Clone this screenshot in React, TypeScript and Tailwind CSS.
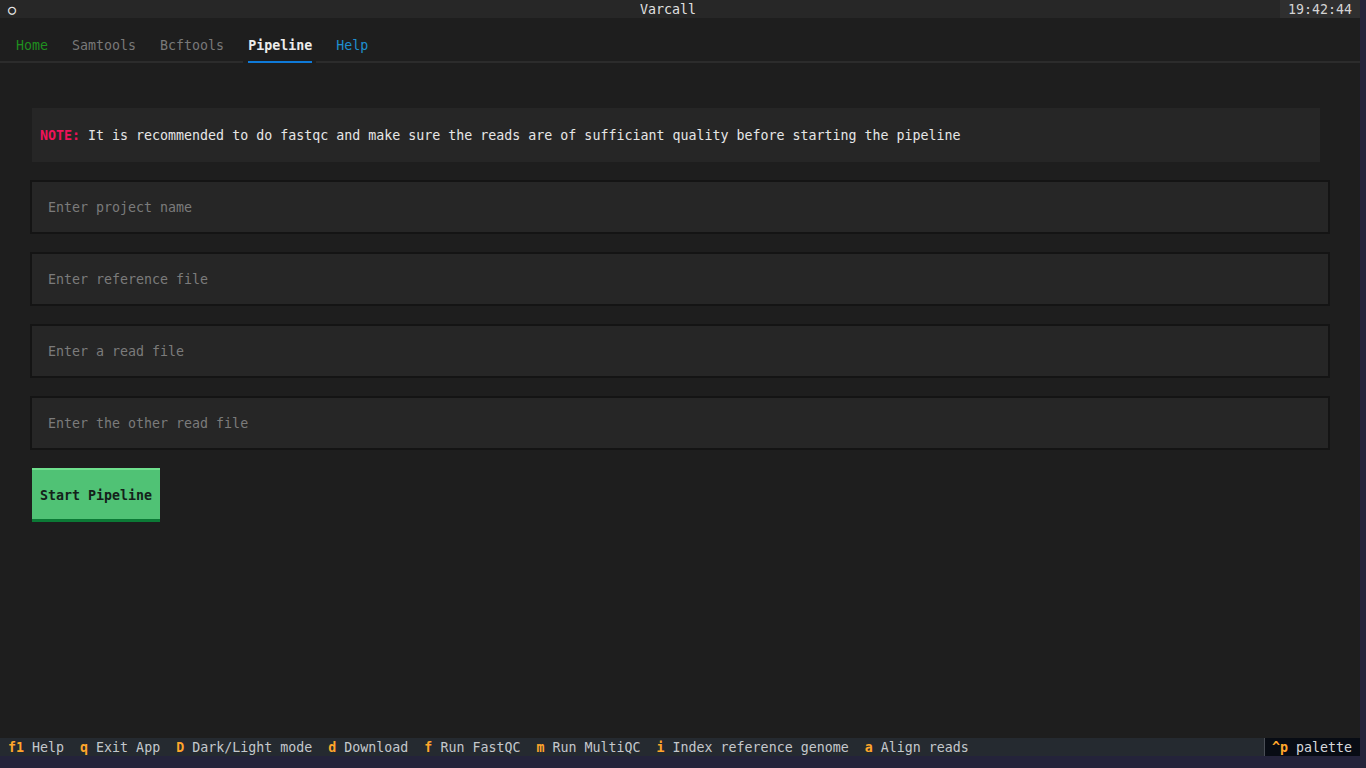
import React from 'react';

const tabs = [
  { label: 'Home', cls: 'text-[#1f8f1f]' },
  { label: 'Samtools', cls: 'text-[#797979]' },
  { label: 'Bcftools', cls: 'text-[#797979]' },
  { label: 'Pipeline', cls: 'text-[#ececec] font-bold', active: true },
  { label: 'Help', cls: 'text-[#1f8fd0]' },
];

const inputs = [
  'Enter project name',
  'Enter reference file',
  'Enter a read file',
  'Enter the other read file',
];

const bindings = [
  ['f1', 'Help'],
  ['q', 'Exit App'],
  ['D', 'Dark/Light mode'],
  ['d', 'Download'],
  ['f', 'Run FastQC'],
  ['m', 'Run MultiQC'],
  ['i', 'Index reference genome'],
  ['a', 'Align reads'],
];

function App() {
  return (
    <div
      className="w-[1366px] h-[768px] bg-[#24233a] overflow-hidden text-[13.3px] leading-[18px]"
      style={{ fontFamily: '"DejaVu Sans Mono", "Liberation Mono", monospace' }}
    >
      <div className="w-[1360px] h-[756px] flex flex-col bg-[#1e1e1e]">
        {/* header */}
        <div className="h-[18px] bg-[#272727] flex items-center relative">
          <span className="pl-[8px] pt-[1px] font-bold text-[#ececec]">○</span>
          <span className="absolute left-[640px] top-[1px] text-[#e0e0e0]">Varcall</span>
          <span className="ml-auto h-full bg-[#2f2f2f] px-[8px] pt-[1px] text-[#d4d4d4]">19:42:44</span>
        </div>

        {/* tabs */}
        <div className="h-[54px] flex flex-col">
          <div className="h-[18px]" />
          <div className="h-[18px] flex pl-[16px] pt-[1px] gap-[24px]">
            {tabs.map(t => (
              <span key={t.label} className={t.cls}>{t.label}</span>
            ))}
          </div>
          <div className="h-[18px] flex items-start pt-[7px]">
            <div className="w-[243px] h-[2px] bg-[#2c2c2c]" />
            <div className="ml-[5px] w-[64px] h-[2px] bg-[#0f7ad8]" />
            <div className="ml-[4px] flex-1 h-[2px] bg-[#2c2c2c]" />
          </div>
        </div>

        {/* content */}
        <div className="flex-1 flex flex-col pt-[36px]">
          <div className="ml-[32px] w-[1288px] h-[54px] bg-[#262626] flex items-center px-[8px] pt-[2px]">
            <span className="font-bold text-[#f0125a]">NOTE:</span>
            <span className="text-[#e6e6e6] whitespace-pre"> It is recommended to do fastqc and make sure the reads are of sufficiant quality before starting the pipeline</span>
          </div>

          <div className="mt-[18px] flex flex-col gap-[18px]">
            {inputs.map(p => (
              <div
                key={p}
                className="ml-[30px] w-[1300px] h-[54px] border-[2px] border-[#141414] bg-[#262626] flex items-center pl-[16px] pt-[2px] text-[#7b7b7b]"
              >
                {p}
              </div>
            ))}
          </div>

          <button className="mt-[18px] ml-[32px] w-[128px] h-[54px] bg-[#50c275] border-t-[2px] border-t-[#6fe08e] border-b-[3px] border-b-[#0c7a36] text-left pl-[8px] pt-[2px] font-bold text-[#14201a]">
            Start Pipeline
          </button>
        </div>

        {/* footer */}
        <div className="h-[18px] bg-[#252a30] flex items-center pt-[2px]">
          <div className="flex">
            {bindings.map(([k, d]) => (
              <span key={k + d} className="px-[8px] whitespace-pre text-[#c4c8cc]">
                <span className="font-bold text-[#ffa62b]">{k}</span> {d}
              </span>
            ))}
          </div>
          <div className="ml-auto h-[18px] -mt-[2px] w-[96px] bg-[#080c14] border-l border-l-[#4a4e56] pl-[7px] pt-[1px] whitespace-pre text-[#d6d8dc]">
            <span className="font-bold text-[#ffa62b]">^p</span> palette
          </div>
        </div>
      </div>
    </div>
  );
}

export default App;
